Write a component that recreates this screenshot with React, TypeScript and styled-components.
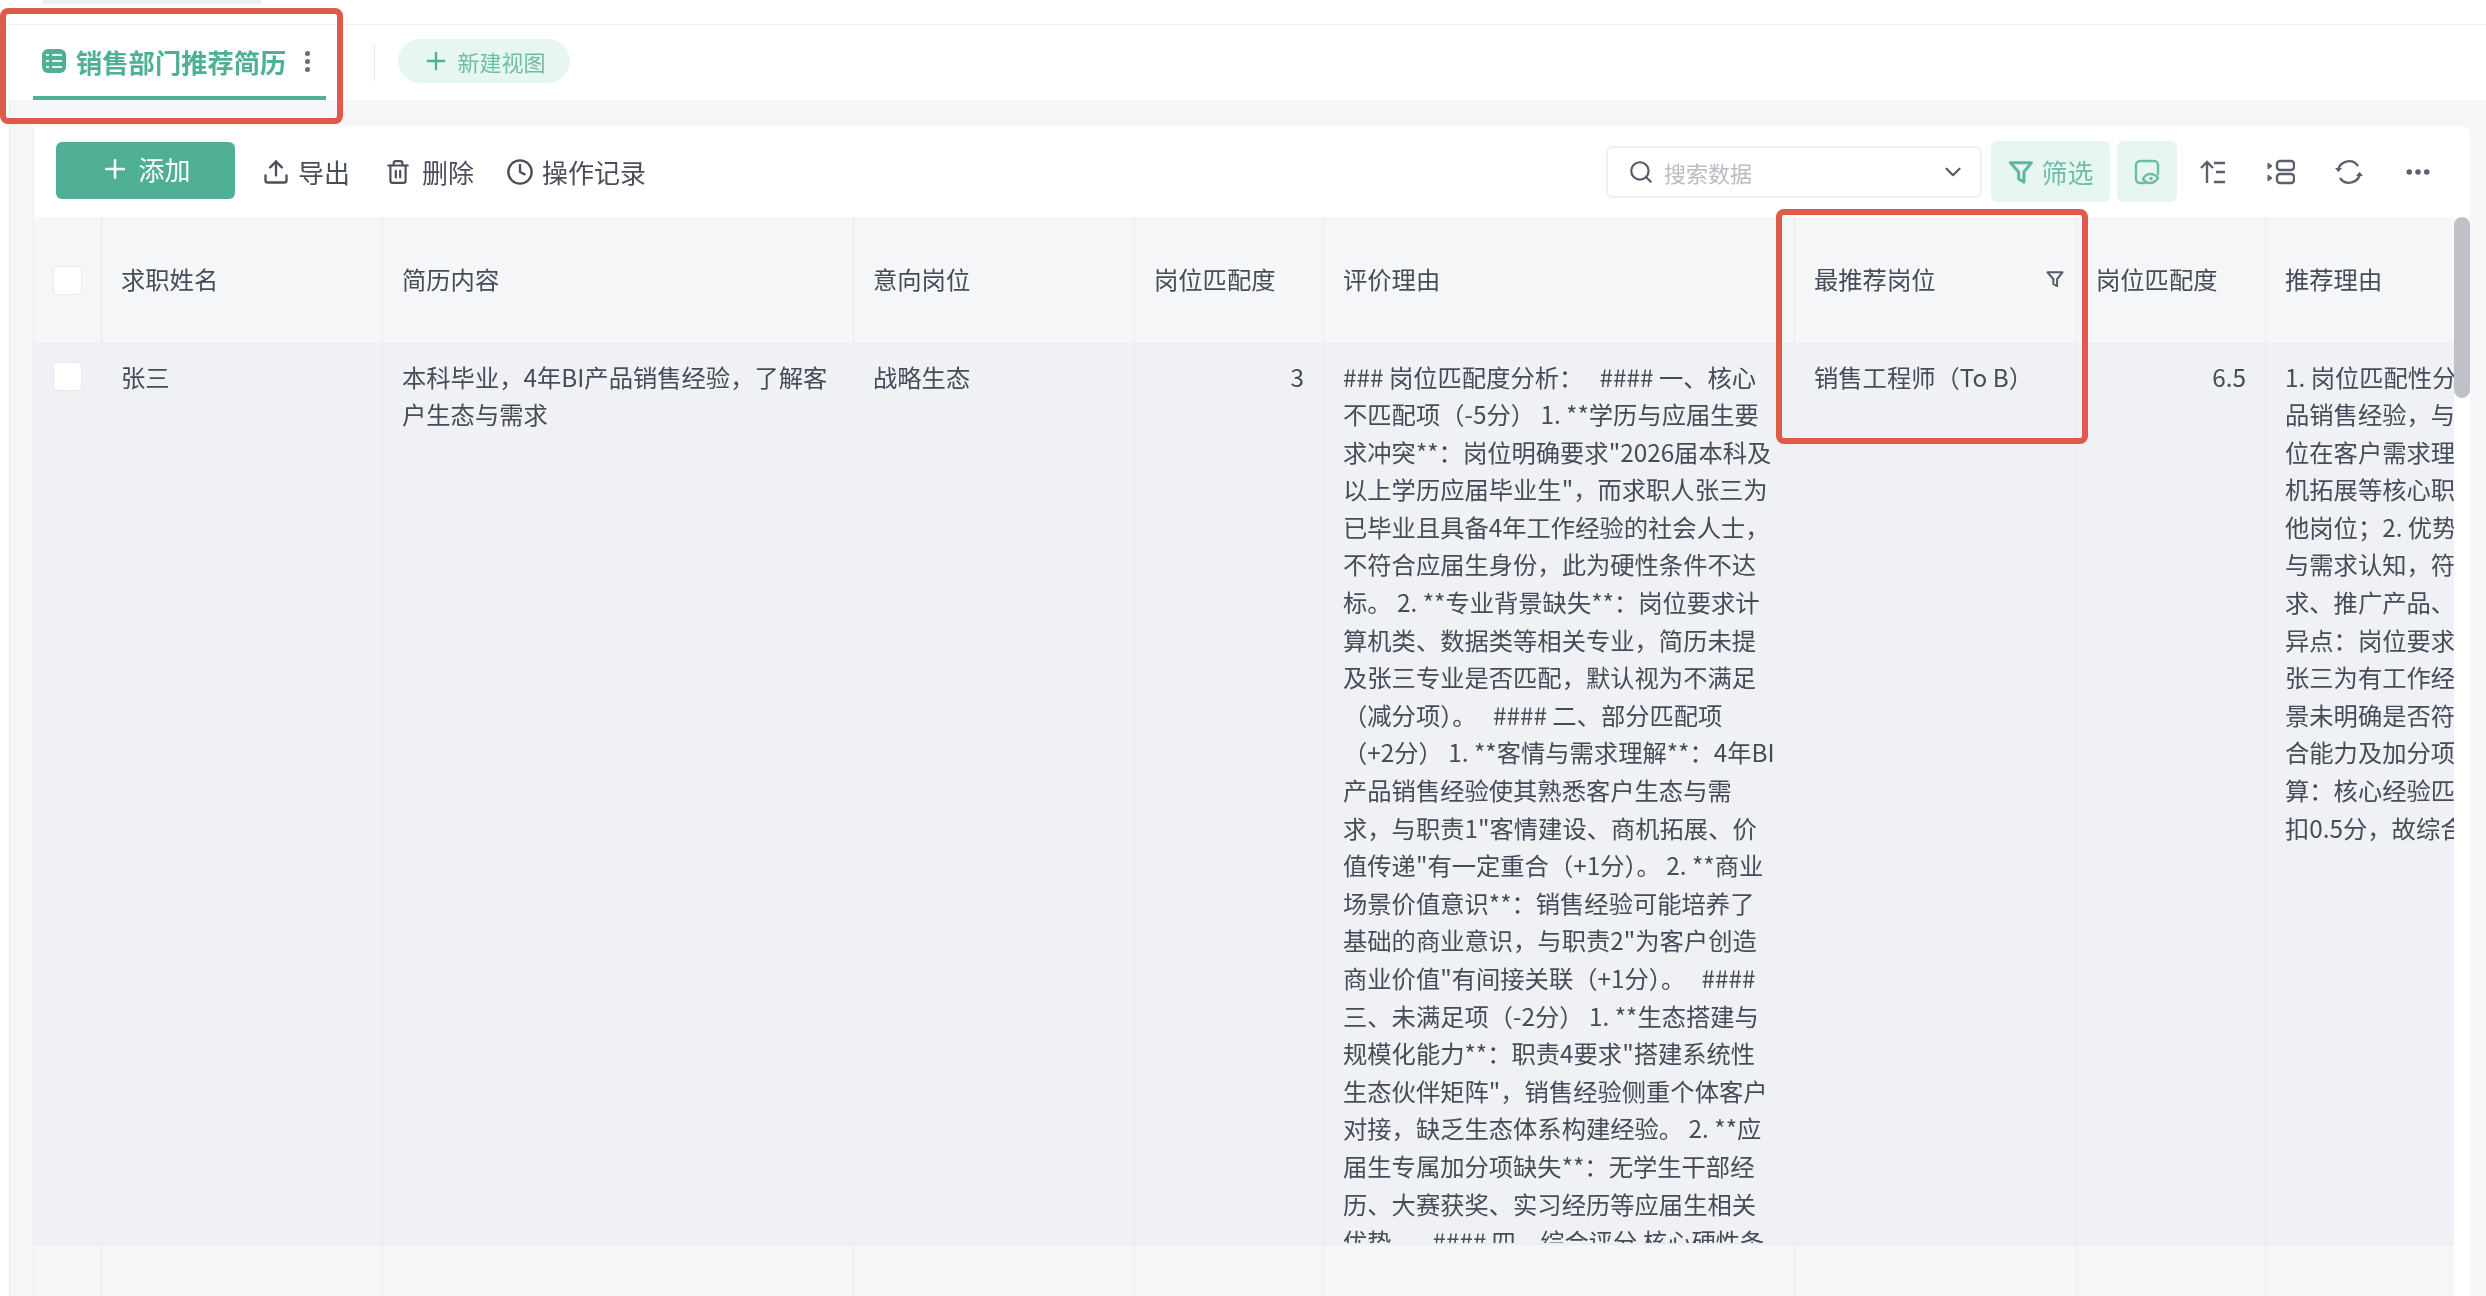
import styled, { createGlobalStyle } from 'styled-components';
import { Clock, Ellipsis, Plus, Search, ChevronDown, Trash2, Upload } from 'lucide-react';

const GlobalStyle = createGlobalStyle`
  html, body {
    margin: 0;
    padding: 0;
    background: #fff;
  }
  body {
    font-family: "Noto Sans CJK SC", "Noto Sans", sans-serif;
    color: #464b58;
  }
`;

const Page = styled.div`
  position: relative;
  width: 2486px;
  height: 1296px;
  overflow: hidden;
  display: flex;
  flex-direction: column;
  background: #fff;
  filter: blur(0.55px);
`;

const TopStrip = styled.div`
  height: 24px;
  flex: none;
  padding-left: 42px;
  border-bottom: 1px solid #eff0f2;
`;

const TopPill = styled.div`
  width: 220px;
  height: 4px;
  background: #eceef1;
  border-radius: 0 0 6px 6px;
`;

const TabBar = styled.div`
  height: 75px;
  flex: none;
  display: flex;
  align-items: center;
  padding-left: 33px;
`;

const Tab = styled.div`
  width: 293px;
  height: 75px;
  box-sizing: border-box;
  display: flex;
  align-items: center;
  padding: 1px 0 0 8px;
  gap: 9px;
  color: #4fb096;
  font-size: 26.3px;
  font-weight: 700;
  border-bottom: 4px solid #4fb096;
`;

const TabDots = styled.span`
  display: flex;
  flex-direction: column;
  gap: 3px;
  margin-left: 10px;

  i {
    width: 5px;
    height: 5px;
    border-radius: 50%;
    background: #666b78;
  }
`;

const TabDivider = styled.div`
  width: 1px;
  height: 37px;
  margin: 0 23px 0 48px;
  background: #e8e9ec;
`;

const NewView = styled.div`
  width: 172px;
  height: 44px;
  box-sizing: border-box;
  display: flex;
  align-items: center;
  justify-content: center;
  gap: 7px;
  margin-bottom: 3px;
  background: #e8f6f2;
  color: #6fbda8;
  border-radius: 22px;
  font-size: 22px;
`;

const Content = styled.div`
  flex: 1;
  min-height: 0;
  margin-left: 9px;
  padding: 26px 16px 0 23px;
  border-left: 1px solid #ebecef;
  background: #f5f6f8;
  display: flex;
`;

const Card = styled.div`
  position: relative;
  flex: 1;
  min-width: 0;
  background: #fff;
  border-radius: 6px 6px 0 0;
  border-left: 1px solid #ebecef;
  display: flex;
  flex-direction: column;
`;

const Toolbar = styled.div`
  height: 91px;
  flex: none;
  display: flex;
  align-items: center;
  padding: 0 37px 0 22px;
`;

const AddButton = styled.button`
  width: 179px;
  height: 57px;
  margin: 0 27px 3px 0;
  padding: 0 0 3px;
  border: 0;
  border-radius: 6px;
  background: #4fb096;
  color: #fff;
  font: inherit;
  font-size: 26px;
  display: flex;
  align-items: center;
  justify-content: center;
  gap: 8px;
`;

const ToolAction = styled.div<{ $gap?: number; $after?: number }>`
  display: flex;
  align-items: center;
  gap: ${(p) => p.$gap ?? 8}px;
  margin-right: ${(p) => p.$after ?? 35}px;
  font-size: 26px;
  color: #4a4e59;
`;

const Spacer = styled.div`
  flex: 1;
`;

const SearchBox = styled.div`
  width: 376px;
  height: 52px;
  box-sizing: border-box;
  display: flex;
  align-items: center;
  gap: 10px;
  padding: 0 14px 0 20px;
  margin-right: 9px;
  border: 2px solid #eeeff2;
  border-radius: 6px;
  font-size: 22px;
  color: #b9bcc4;

  span {
    flex: 1;
  }
`;

const GreenButton = styled.div<{ $width: number }>`
  width: ${(p) => p.$width}px;
  height: 61px;
  margin-right: 7px;
  display: flex;
  align-items: center;
  justify-content: center;
  gap: 6px;
  border-radius: 6px;
  background: #e8f6f2;
  color: #6fbda8;
  font-size: 26px;
`;

const IconRow = styled.div`
  display: flex;
  align-items: center;
  gap: 40px;
  margin-left: 15px;
  color: #5b606c;
`;

const TableWrap = styled.div`
  flex: 1;
  min-height: 0;
  overflow: hidden;
  margin-right: 15px;
`;

const Row = styled.div<{ $bg: string; $height?: number }>`
  display: grid;
  grid-template-columns: 68px 281px 471px 281px 189px 471px 282px 189px 471px;
  height: ${(p) => (p.$height ? `${p.$height}px` : 'auto')};
  background: ${(p) => p.$bg};
  border-bottom: 2px solid #ecedf0;
  box-sizing: border-box;
`;

const HeadCell = styled.div<{ $tight?: boolean }>`
  display: flex;
  align-items: center;
  justify-content: space-between;
  padding: 0 ${(p) => (p.$tight ? '11px' : '19px')} 3px 19px;
  border-right: 1px solid #eaebef;
  font-size: 24.3px;
  color: #464b58;
  min-width: 0;
`;

const CheckCell = styled.div<{ $top?: boolean }>`
  display: flex;
  justify-content: center;
  align-items: ${(p) => (p.$top ? 'flex-start' : 'center')};
  padding-top: ${(p) => (p.$top ? '17px' : '0')};
  border-right: 1px solid #e8e9ed;
`;

const Check = styled.div`
  width: 29px;
  height: 29px;
  box-sizing: border-box;
  background: #fff;
  border: 1px solid #e8e9ed;
  border-radius: 4px;
`;

const BodyCell = styled.div<{ $right?: boolean }>`
  padding: 12.5px 19px 0;
  border-right: 1px solid #e8e9ed;
  font-size: 24.3px;
  line-height: 37.6px;
  color: #464b58;
  overflow: hidden;
  min-width: 0;
  text-align: ${(p) => (p.$right ? 'right' : 'left')};
`;

const Line = styled.div`
  white-space: pre;
`;

const EmptyCell = styled.div`
  border-right: 1px solid #e8e9ed;
`;

const ScrollTrack = styled.div`
  position: absolute;
  top: 91px;
  right: 0;
  bottom: 0;
  width: 16px;
  background: #fff;
`;

const ScrollThumb = styled.div`
  width: 16px;
  height: 181px;
  background: #bfc1c6;
  border-radius: 8px;
`;

const Annotation = styled.div<{ $x: number; $y: number; $w: number; $h: number }>`
  position: absolute;
  left: ${(p) => p.$x}px;
  top: ${(p) => p.$y}px;
  width: ${(p) => p.$w}px;
  height: ${(p) => p.$h}px;
  box-sizing: border-box;
  border: 6px solid #e05a4c;
  border-radius: 8px;
`;

const TableIcon = () => (
  <svg width="26" height="26" viewBox="0 0 26 26">
    <rect x="1" y="1" width="24" height="24" rx="6" fill="#4fb096" />
    <path d="M11 7h10M11 13h10M11 19h10M5 7h3M5 13h3M5 19h3" stroke="#e8f6f2" strokeWidth="2" />
  </svg>
);

const FunnelIcon = ({ size, color, width }: { size: number; color: string; width: number }) => (
  <svg width={size} height={size} viewBox="0 0 24 24" fill="none" stroke={color} strokeWidth={width} strokeLinejoin="round">
    <path d="M3 4h18l-6.5 8v8.5l-4.5-2.5v-6z" />
  </svg>
);

const ViewIcon = () => (
  <svg width="28" height="28" viewBox="0 0 28 28" fill="none" stroke="#6fbda8" strokeWidth="2.4">
    <path d="M12 25H7a4 4 0 0 1-4-4V7a4 4 0 0 1 4-4h14a4 4 0 0 1 4 4v9" strokeLinecap="round" />
    <path d="M10 21c2-4 4-5 7-5s6 1 8 4c-2 3-5 5-8 5s-5-1-7-4z" fill="#e8f6f2" />
    <circle cx="18" cy="20.5" r="1.8" fill="#6fbda8" stroke="none" />
  </svg>
);

const SortIcon = () => (
  <svg width="28" height="28" viewBox="0 0 28 28" fill="none" stroke="#5b606c" strokeWidth="2.4">
    <path d="M8 25V4M2 10l6-6 6 6" />
    <path d="M15 5h11M17 14h9M15 24h11" />
  </svg>
);

const GroupIcon = () => (
  <svg width="28" height="28" viewBox="0 0 28 28" fill="none" stroke="#5b606c" strokeWidth="2.4">
    <rect x="10" y="3" width="17" height="9" rx="3" />
    <rect x="10" y="16" width="17" height="9" rx="3" />
    <path d="M1 5l4 3-4 3zM1 17l4 3-4 3z" fill="#5b606c" strokeWidth="1" />
  </svg>
);

const RefreshIcon = () => (
  <svg width="28" height="28" viewBox="0 0 28 28" fill="none" stroke="#5b606c" strokeWidth="2.4">
    <path d="M3 13a11 11 0 0 1 20-5" />
    <path d="M25 15a11 11 0 0 1-20 5" />
    <path d="M0 10l3.5 4 3.5-4zM21 18l3.5-4 3.5 4z" fill="#5b606c" stroke="none" />
  </svg>
);

const evaluationLines = [
  '### 岗位匹配度分析：   #### 一、核心',
  '不匹配项（-5分） 1. **学历与应届生要',
  '求冲突**：岗位明确要求"2026届本科及',
  '以上学历应届毕业生"，而求职人张三为',
  '已毕业且具备4年工作经验的社会人士，',
  '不符合应届生身份，此为硬性条件不达',
  '标。 2. **专业背景缺失**：岗位要求计',
  '算机类、数据类等相关专业，简历未提',
  '及张三专业是否匹配，默认视为不满足',
  '（减分项）。   #### 二、部分匹配项',
  '（+2分） 1. **客情与需求理解**：4年BI',
  '产品销售经验使其熟悉客户生态与需',
  '求，与职责1"客情建设、商机拓展、价',
  '值传递"有一定重合（+1分）。 2. **商业',
  '场景价值意识**：销售经验可能培养了',
  '基础的商业意识，与职责2"为客户创造',
  '商业价值"有间接关联（+1分）。   ####',
  '三、未满足项（-2分） 1. **生态搭建与',
  '规模化能力**：职责4要求"搭建系统性',
  '生态伙伴矩阵"，销售经验侧重个体客户',
  '对接，缺乏生态体系构建经验。 2. **应',
  '届生专属加分项缺失**：无学生干部经',
  '历、大赛获奖、实习经历等应届生相关',
  '优势。   #### 四、综合评分 核心硬性条',
];

const reasonLines = [
  '1. 岗位匹配性分析',
  '品销售经验，与',
  '位在客户需求理',
  '机拓展等核心职',
  '他岗位；2. 优势',
  '与需求认知，符',
  '求、推广产品、',
  '异点：岗位要求',
  '张三为有工作经',
  '景未明确是否符',
  '合能力及加分项',
  '算：核心经验匹',
  '扣0.5分，故综合',
];

const headers = ['简历内容', '意向岗位', '岗位匹配度', '评价理由'];

export default function App() {
  return (
    <Page>
      <GlobalStyle />
      <TopStrip>
        <TopPill />
      </TopStrip>
      <TabBar>
        <Tab>
          <TableIcon />
          销售部门推荐简历
          <TabDots>
            <i />
            <i />
            <i />
          </TabDots>
        </Tab>
        <TabDivider />
        <NewView>
          <Plus size={28} strokeWidth={2} color="#4fb096" />
          新建视图
        </NewView>
      </TabBar>
      <Content>
        <Card>
          <Toolbar>
            <AddButton>
              <Plus size={30} strokeWidth={2} />
              添加
            </AddButton>
            <ToolAction>
              <Upload size={28} strokeWidth={2} />
              导出
            </ToolAction>
            <ToolAction $gap={11} $after={32}>
              <Trash2 size={26} strokeWidth={2} />
              删除
            </ToolAction>
            <ToolAction>
              <Clock size={28} strokeWidth={2} />
              操作记录
            </ToolAction>
            <Spacer />
            <SearchBox>
              <Search size={26} color="#555a66" strokeWidth={2} />
              <span>搜索数据</span>
              <ChevronDown size={26} color="#555a66" strokeWidth={2} />
            </SearchBox>
            <GreenButton $width={119}>
              <FunnelIcon size={28} color="#5fb7a0" width={2.6} />
              筛选
            </GreenButton>
            <GreenButton $width={60}>
              <ViewIcon />
            </GreenButton>
            <IconRow>
              <SortIcon />
              <GroupIcon />
              <RefreshIcon />
              <Ellipsis size={30} color="#5b606c" strokeWidth={2.4} />
            </IconRow>
          </Toolbar>
          <TableWrap>
            <Row $bg="#f5f6f8" $height={128}>
              <CheckCell>
                <Check />
              </CheckCell>
              <HeadCell>求职姓名</HeadCell>
              {headers.map((h) => (
                <HeadCell key={h}>{h}</HeadCell>
              ))}
              <HeadCell $tight>
                最推荐岗位
                <FunnelIcon size={20} color="#555a66" width={2.4} />
              </HeadCell>
              <HeadCell>岗位匹配度</HeadCell>
              <HeadCell>推荐理由</HeadCell>
            </Row>
            <Row $bg="#f0f1f5" $height={900}>
              <CheckCell $top>
                <Check />
              </CheckCell>
              <BodyCell>张三</BodyCell>
              <BodyCell>
                <Line>本科毕业，4年BI产品销售经验，了解客</Line>
                <Line>户生态与需求</Line>
              </BodyCell>
              <BodyCell>战略生态</BodyCell>
              <BodyCell $right>3</BodyCell>
              <BodyCell>
                {evaluationLines.map((l) => (
                  <Line key={l}>{l}</Line>
                ))}
              </BodyCell>
              <BodyCell>销售工程师（To B）</BodyCell>
              <BodyCell $right>6.5</BodyCell>
              <BodyCell>
                {reasonLines.map((l) => (
                  <Line key={l}>{l}</Line>
                ))}
              </BodyCell>
            </Row>
            <Row $bg="#f5f6f8" $height={60}>
              <EmptyCell />
              <EmptyCell />
              <EmptyCell />
              <EmptyCell />
              <EmptyCell />
              <EmptyCell />
              <EmptyCell />
              <EmptyCell />
              <EmptyCell />
            </Row>
          </TableWrap>
          <ScrollTrack>
            <ScrollThumb />
          </ScrollTrack>
        </Card>
      </Content>
      <Annotation $x={0} $y={8} $w={343} $h={116} />
      <Annotation $x={1776} $y={209} $w={312} $h={235} />
    </Page>
  );
}
